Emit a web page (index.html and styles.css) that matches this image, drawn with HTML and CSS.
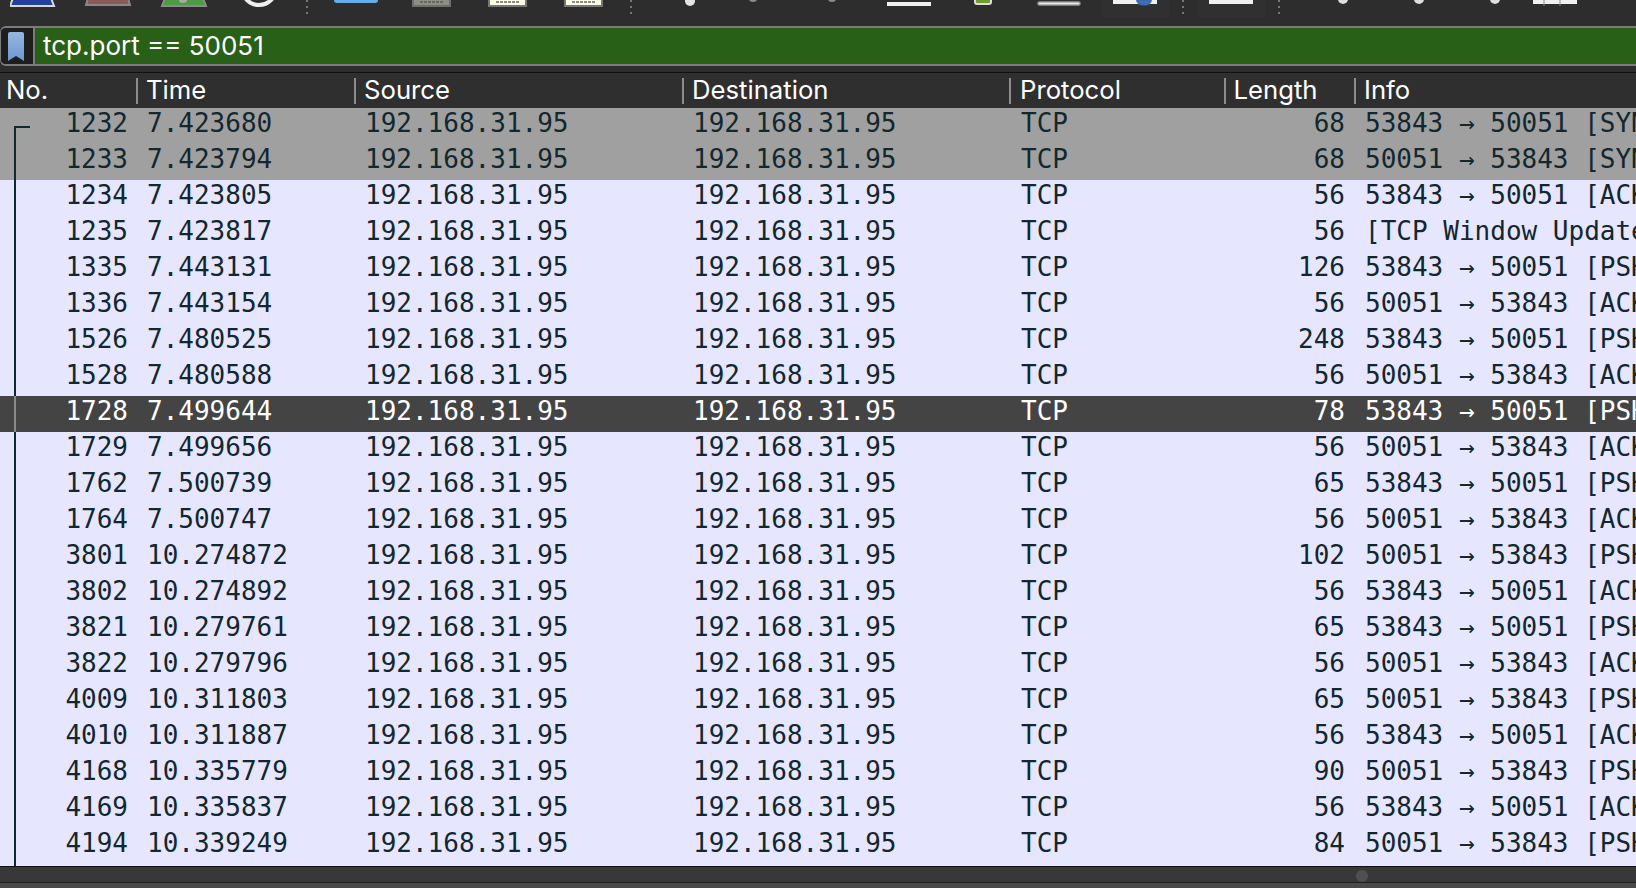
FILE: index.html
```html
<!DOCTYPE html>
<html lang="en">
<head>
  <meta charset="UTF-8">
  <title>Wireshark</title>
  <link rel="stylesheet" href="styles.css">
</head>
<body>

<!-- Toolbar, icons are cut off by the top of the window -->
<div class="toolbar">
  <svg class="group-a" width="270" height="8" viewBox="0 0 270 8">
    <path d="M3 -2H41L44 6H0Z" fill="#22409c" stroke="#d8d8d8" stroke-width="2"/>
    <path d="M78 -2H118L120 5H76Z" fill="#8a5a58" stroke="#888" stroke-width="2"/>
    <path d="M155 -2H193L196 6H152Z" fill="#4f9a45" stroke="#8a8a8a" stroke-width="2"/>
    <ellipse cx="173" cy="0" rx="4" ry="3" fill="#a8a8a8"/>
    <circle cx="249" cy="-12" r="17" fill="none" stroke="#eee" stroke-width="4"/>
  </svg>
  <span class="sep sep-a"></span>
  <svg class="group-b" width="269" height="8" viewBox="0 0 269 8">
    <path d="M0 -2H44V0Q44 3 41 3H3Q0 3 0 0Z" fill="#64afe8"/>
    <rect x="79" y="-3" width="37" height="9" fill="#8e8e86" stroke="#6e6e6e" stroke-width="2"/>
    <path d="M86 2H110" stroke="#6a6a64" stroke-width="2" stroke-dasharray="3 1"/>
    <rect x="155" y="-3" width="37" height="9" fill="#fbfbe8" stroke="#777" stroke-width="2"/>
    <path d="M162 2H186" stroke="#8c8c80" stroke-width="2" stroke-dasharray="3 1"/>
    <rect x="231" y="-3" width="37" height="9" fill="#fbfbe8" stroke="#777" stroke-width="2"/>
    <path d="M238 2H262" stroke="#8c8c80" stroke-width="2" stroke-dasharray="3 1"/>
  </svg>
  <span class="sep sep-b"></span>
  <svg class="group-c" width="398" height="8" viewBox="0 0 398 8">
    <ellipse cx="6" cy="1" rx="5" ry="5" fill="#e4e4e4"/>
    <ellipse cx="69" cy="-1" rx="4" ry="3" fill="#8c8c8c"/>
    <ellipse cx="148" cy="-1" rx="4" ry="3" fill="#8c8c8c"/>
    <rect x="203" y="2" width="44" height="4" fill="#f0f0f0"/>
    <rect x="291" y="-3" width="16" height="7" rx="2" fill="#6f9e2e" stroke="#ddd" stroke-width="2"/>
    <rect x="354" y="2" width="42" height="3" rx="1.5" fill="#eee" stroke="#999" stroke-width="1.5"/>
  </svg>
  <span class="tool-btn tool-btn-first">
    <svg width="44" height="6" viewBox="0 0 44 6">
      <rect width="44" height="4" fill="#f0f0f0"/>
      <ellipse cx="31" cy="0" rx="8" ry="5.5" fill="#3f6cb0"/>
    </svg>
  </span>
  <span class="sep sep-c"></span>
  <span class="tool-btn tool-btn-second">
    <svg width="44" height="6" viewBox="0 0 44 6">
      <rect width="44" height="4" fill="#f0f0f0"/>
    </svg>
  </span>
  <span class="sep sep-d"></span>
  <svg class="group-d" width="240" height="8" viewBox="0 0 240 8">
    <ellipse cx="5" cy="-1" rx="5" ry="5" fill="#dedede"/>
    <ellipse cx="81" cy="-1" rx="5" ry="5" fill="#dedede"/>
    <ellipse cx="157" cy="-1" rx="5" ry="5" fill="#dedede"/>
    <rect x="195" y="0" width="44" height="4" fill="#f0f0f0"/>
    <path d="M206 0V6M222 0V6" stroke="#8a8a8a"/>
  </svg>
</div>

<!-- Display filter -->
<div class="filter">
  <div class="filter-mark">
    <svg width="16" height="29" viewBox="0 0 16 29">
      <defs>
        <linearGradient id="markFill" x1="0" y1="0" x2="0" y2="1">
          <stop offset="0" stop-color="#93b8e2"/>
          <stop offset="1" stop-color="#6f97cc"/>
        </linearGradient>
      </defs>
      <path d="M2 0H14Q16 0 16 2V29L8 24L0 29V2Q0 0 2 0Z" fill="url(#markFill)"/>
    </svg>
  </div>
  <div class="filter-text">tcp.port == 50051</div>
</div>

<!-- Packet list -->
<div class="packets">
  <div class="packet-head">
    <div class="head-cell">No.</div>
    <div class="head-cell">Time</div>
    <div class="head-cell">Source</div>
    <div class="head-cell">Destination</div>
    <div class="head-cell">Protocol</div>
    <div class="head-cell">Length</div>
    <div class="head-cell">Info</div>
  </div>
  <div class="packet-rows" id="rows"></div>
  <div class="conv-line"></div>
</div>

<div class="scrollbar"><span class="scroll-thumb"></span></div>
<div class="statusline"></div>

<script>
  var packets = [
    ['1232', '7.423680', '68', '53843 → 50051 [SYN] Seq=0 Win=65535', 'syn'],
    ['1233', '7.423794', '68', '50051 → 53843 [SYN, ACK] Seq=0 Ack=1', 'syn'],
    ['1234', '7.423805', '56', '53843 → 50051 [ACK] Seq=1 Ack=1'],
    ['1235', '7.423817', '56', '[TCP Window Update] 50051 → 53843'],
    ['1335', '7.443131', '126', '53843 → 50051 [PSH, ACK] Seq=1 Ack=1'],
    ['1336', '7.443154', '56', '50051 → 53843 [ACK] Seq=1 Ack=71'],
    ['1526', '7.480525', '248', '53843 → 50051 [PSH, ACK] Seq=71 Ack=1'],
    ['1528', '7.480588', '56', '50051 → 53843 [ACK] Seq=1 Ack=263'],
    ['1728', '7.499644', '78', '53843 → 50051 [PSH, ACK] Seq=263 Ack=1', 'current'],
    ['1729', '7.499656', '56', '50051 → 53843 [ACK] Seq=1 Ack=285'],
    ['1762', '7.500739', '65', '53843 → 50051 [PSH, ACK] Seq=285 Ack=1'],
    ['1764', '7.500747', '56', '50051 → 53843 [ACK] Seq=1 Ack=294'],
    ['3801', '10.274872', '102', '50051 → 53843 [PSH, ACK] Seq=1 Ack=294'],
    ['3802', '10.274892', '56', '53843 → 50051 [ACK] Seq=294 Ack=47'],
    ['3821', '10.279761', '65', '53843 → 50051 [PSH, ACK] Seq=294 Ack=47'],
    ['3822', '10.279796', '56', '50051 → 53843 [ACK] Seq=47 Ack=303'],
    ['4009', '10.311803', '65', '50051 → 53843 [PSH, ACK] Seq=47 Ack=303'],
    ['4010', '10.311887', '56', '53843 → 50051 [ACK] Seq=303 Ack=56'],
    ['4168', '10.335779', '90', '50051 → 53843 [PSH, ACK] Seq=56 Ack=303'],
    ['4169', '10.335837', '56', '53843 → 50051 [ACK] Seq=303 Ack=90'],
    ['4194', '10.339249', '84', '50051 → 53843 [PSH, ACK] Seq=90 Ack=303']
  ];

  var rows = document.getElementById('rows');
  packets.forEach(function (p) {
    var row = document.createElement('div');
    row.className = 'packet-row' + (p[4] ? ' ' + p[4] : '');
    var cells = [
      ['cell-no', p[0]], ['cell', p[1]], ['cell', '192.168.31.95'], ['cell', '192.168.31.95'],
      ['cell', 'TCP'], ['cell-len', p[2]], ['cell-info', p[3]]
    ];
    cells.forEach(function (c) {
      var cell = document.createElement('div');
      cell.className = c[0];
      cell.textContent = c[1];
      row.appendChild(cell);
    });
    rows.appendChild(row);
  });
</script>

</body>
</html>
```

FILE: styles.css
```css
body {
  margin: 0;
  height: 888px;
  overflow: hidden;
  background-color: #2d2d2d;
  font-family: "Inter", "Liberation Sans", sans-serif;
}

/* Toolbar */
.toolbar {
  display: flex;
  align-items: flex-start;
  height: 26px;
  padding-left: 10px;
}

.toolbar svg {
  display: block;
  flex: none;
}

.sep {
  flex: none;
  width: 2px;
  height: 15px;
  background: repeating-linear-gradient(#777 0 2px, transparent 2px 6px);
}

.sep-a { margin-left: 26px; }
.group-b { margin-left: 26px; }
.sep-b { margin-left: 27px; }
.group-c { margin-left: 52px; }
.sep-c { margin-left: 13px; }
.sep-d { margin-left: 13px; }
.group-d { margin-left: 58px; }

.tool-btn {
  flex: none;
  box-sizing: border-box;
  width: 68px;
  height: 17px;
  padding-left: 12px;
  background-color: #303030;
}

.tool-btn-first { margin-left: 19px; }
.tool-btn-second { margin-left: 13px; }

/* Filter bar */
.filter {
  display: flex;
  height: 36px;
  overflow: hidden;
  border: 2px solid #7c7c7c;
  border-width: 2px 0 2px 1px;
  border-radius: 6px 0 0 6px;
}

.filter-mark {
  flex: none;
  box-sizing: border-box;
  width: 34px;
  padding: 4px 0 0 7px;
  background-color: #1e1e1e;
  border-right: 2px solid #7c7c7c;
}

.filter-text {
  flex: 1;
  padding-left: 8px;
  background-color: #296017;
  color: #fff;
  font-size: 26px;
  line-height: 36px;
}

/* Packet list */
.packets {
  position: relative;
  margin-top: 6px;
  border-top: 1px solid #111;
}

.packet-head,
.packet-row {
  display: grid;
  grid-template-columns: 136px 218px 328px 327px 214.5px 130.5px 1fr;
}

.packet-head {
  height: 35px;
  align-items: center;
  background-color: #2f2f2f;
  color: #fff;
  font-size: 25.7px;
}

.head-cell {
  height: 26px;
  padding-left: 8px;
  border-left: 2px solid #8c8c8c;
  line-height: 24px;
  white-space: nowrap;
}

.head-cell:first-child {
  padding-left: 6px;
  border-left: none;
}

.head-cell:nth-child(5) {
  padding-left: 9px;
}

.packet-rows {
  display: grid;
  grid-auto-rows: 36px;
  height: 758px;
  font-family: "DejaVu Sans Mono", "Liberation Mono", monospace;
  font-size: 26px;
  color: #12272e;
  background-color: #e7e6ff;
}

.packet-row {
  line-height: 31px;
  white-space: pre;
  overflow: hidden;
}

.packet-row.syn {
  background-color: #a0a0a0;
}

.packet-row.current {
  background-color: #444;
  color: #fff;
}

.cell {
  padding-left: 11px;
}

.cell:nth-child(5) {
  padding-left: 12px;
}

.cell-no {
  padding-right: 8px;
  text-align: right;
}

.cell-len {
  padding-right: 9px;
  text-align: right;
}

.cell-info {
  padding-left: 11px;
  overflow: hidden;
}

/* conversation bracket on the left of the list, lighter across the current row */
.conv-line {
  position: absolute;
  left: 14px;
  top: 53px;
  bottom: 0;
  width: 16px;
  background:
    linear-gradient(#12272e, #12272e) no-repeat 0 0 / 100% 2px,
    linear-gradient(#12272e 270px, #8a8a8a 270px 306px, #12272e 306px) no-repeat 0 0 / 2px 100%;
}

/* Bottom scroll bar */
.scrollbar {
  position: relative;
  height: 15px;
  background-color: #383838;
  border-top: 1px solid #111;
  border-bottom: 1px solid #222;
}

.scroll-thumb {
  position: absolute;
  left: 1356px;
  top: 3px;
  width: 12px;
  height: 12px;
  border-radius: 50%;
  background-color: #505050;
}

.statusline {
  height: 6px;
  background-color: #4a4a4a;
}
```
